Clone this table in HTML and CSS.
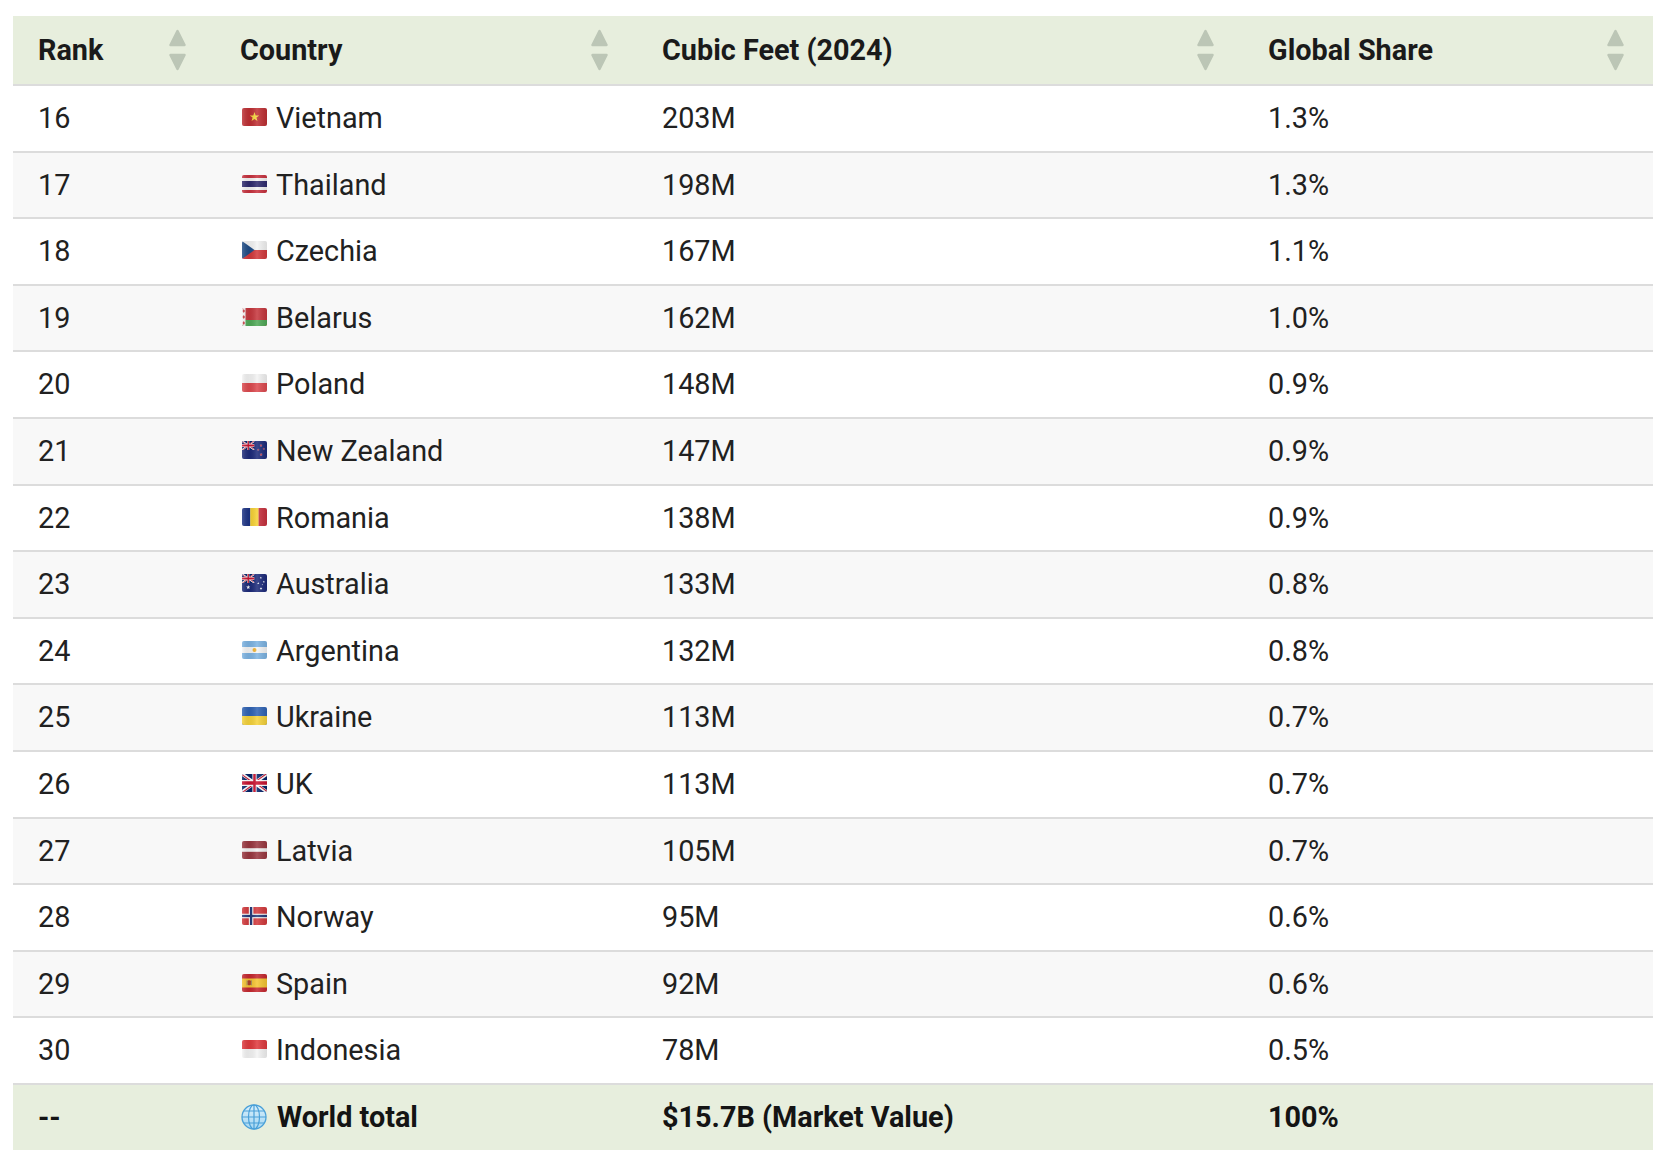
FILE: index.html
```html
<!DOCTYPE html>
<html lang="en">
<head>
<meta charset="utf-8">
<title>Top countries by cubic feet (2024)</title>
<link rel="stylesheet" href="styles.css">
</head>
<body>
<div class="sprite">
<svg width="0" height="0" xmlns="http://www.w3.org/2000/svg">
  <defs>
    <linearGradient id="wave" x1="0" y1="0" x2="1" y2="0">
      <stop offset="0" stop-color="#fff" stop-opacity="0.18"/>
      <stop offset="0.3" stop-color="#000" stop-opacity="0.06"/>
      <stop offset="0.6" stop-color="#fff" stop-opacity="0.14"/>
      <stop offset="1" stop-color="#000" stop-opacity="0.10"/>
    </linearGradient>
    <linearGradient id="globeFill" x1="0" y1="0" x2="0" y2="1">
      <stop offset="0" stop-color="#d7eefb"/>
      <stop offset="1" stop-color="#a6d7f2"/>
    </linearGradient>
    <clipPath id="fr"><rect width="25" height="18" rx="2"/></clipPath>
    <clipPath id="ujt"><path d="M30,15 h30 v15 z v15 h-30 z h-30 v-15 z v-15 h30 z"/></clipPath>
    <symbol id="uj" viewBox="0 0 60 30" preserveAspectRatio="none">
      <rect width="60" height="30" fill="#012169"/>
      <path d="M0,0 L60,30 M60,0 L0,30" stroke="#fff" stroke-width="6"/>
      <path d="M0,0 L60,30 M60,0 L0,30" clip-path="url(#ujt)" stroke="#C8102E" stroke-width="4"/>
      <path d="M30,0 v30 M0,15 h60" stroke="#fff" stroke-width="10"/>
      <path d="M30,0 v30 M0,15 h60" stroke="#C8102E" stroke-width="6"/>
    </symbol>
    <symbol id="star5" viewBox="0 0 10 10">
      <path d="M5 0 L6.18 3.38 L9.76 3.45 L6.9 5.62 L7.94 9.05 L5 7 L2.06 9.05 L3.1 5.62 L0.24 3.45 L3.82 3.38 Z"/>
    </symbol>
  </defs>
  <symbol id="f-vn" viewBox="0 0 25 18"><g clip-path="url(#fr)">
    <rect width="25" height="18" fill="#bf2f33"/>
    <path d="M12.5 4 L13.68 7.38 L17.26 7.45 L14.40 9.62 L15.44 13.05 L12.5 11 L9.56 13.05 L10.60 9.62 L7.74 7.45 L11.32 7.38 Z" fill="#f7d83e"/>
    <rect width="25" height="18" fill="url(#wave)"/></g></symbol>
  <symbol id="f-th" viewBox="0 0 25 18"><g clip-path="url(#fr)">
    <rect width="25" height="18" fill="#c8313e"/>
    <rect y="3" width="25" height="12" fill="#f4f4f4"/>
    <rect y="6" width="25" height="6" fill="#2e2a6e"/>
    <rect width="25" height="18" fill="url(#wave)"/></g></symbol>
  <symbol id="f-cz" viewBox="0 0 25 18"><g clip-path="url(#fr)">
    <rect width="25" height="18" fill="#f4f4f4"/>
    <rect y="9" width="25" height="9" fill="#d3393c"/>
    <path d="M0 0 L12.5 9 L0 18 Z" fill="#1f4c86"/>
    <rect width="25" height="18" fill="url(#wave)"/></g></symbol>
  <symbol id="f-by" viewBox="0 0 25 18"><g clip-path="url(#fr)">
    <rect width="25" height="18" fill="#c6363d"/>
    <rect y="12" width="25" height="6" fill="#4fa957"/>
    <rect width="3.5" height="18" fill="#f4f4f4"/>
    <path d="M1.75 1 L3 3 L1.75 5 L0.5 3 Z M1.75 7 L3 9 L1.75 11 L0.5 9 Z M1.75 13 L3 15 L1.75 17 L0.5 15 Z" fill="#c6363d"/>
    <rect width="25" height="18" fill="url(#wave)"/></g></symbol>
  <symbol id="f-pl" viewBox="0 0 25 18"><g clip-path="url(#fr)">
    <rect width="25" height="18" fill="#f4f4f4"/>
    <rect y="9" width="25" height="9" fill="#de4a4f"/>
    <rect width="25" height="18" fill="url(#wave)"/></g></symbol>
  <symbol id="f-nz" viewBox="0 0 25 18"><g clip-path="url(#fr)">
    <rect width="25" height="18" fill="#1c2a7a"/>
    <use href="#uj" x="0" y="0" width="12.5" height="9"/>
    <g fill="#d62d3a" stroke="#fff" stroke-width="0.5">
      <use href="#star5" x="17.5" y="3" width="3" height="3"/>
      <use href="#star5" x="20.5" y="6.5" width="2.6" height="2.6"/>
      <use href="#star5" x="15" y="7.5" width="2.6" height="2.6"/>
      <use href="#star5" x="17.5" y="12" width="3.2" height="3.2"/>
    </g>
    <rect width="25" height="18" fill="url(#wave)"/></g></symbol>
  <symbol id="f-ro" viewBox="0 0 25 18"><g clip-path="url(#fr)">
    <rect width="8.4" height="18" fill="#1c3385"/>
    <rect x="8.3" width="8.4" height="18" fill="#f6d133"/>
    <rect x="16.6" width="8.4" height="18" fill="#c8313e"/>
    <rect width="25" height="18" fill="url(#wave)"/></g></symbol>
  <symbol id="f-au" viewBox="0 0 25 18"><g clip-path="url(#fr)">
    <rect width="25" height="18" fill="#1c2a7a"/>
    <use href="#uj" x="0" y="0" width="12.5" height="9"/>
    <g fill="#fff">
      <use href="#star5" x="4" y="11" width="4.5" height="4.5"/>
      <use href="#star5" x="17.5" y="2.5" width="2.6" height="2.6"/>
      <use href="#star5" x="20.5" y="6.5" width="2.6" height="2.6"/>
      <use href="#star5" x="15" y="8" width="2.6" height="2.6"/>
      <use href="#star5" x="17.5" y="13" width="3" height="3"/>
      <use href="#star5" x="19.5" y="10" width="1.6" height="1.6"/>
    </g>
    <rect width="25" height="18" fill="url(#wave)"/></g></symbol>
  <symbol id="f-ar" viewBox="0 0 25 18"><g clip-path="url(#fr)">
    <rect width="25" height="18" fill="#7db4e3"/>
    <rect y="6" width="25" height="6" fill="#f6f6f6"/>
    <circle cx="12.5" cy="9" r="2" fill="#f2b331"/>
    <rect width="25" height="18" fill="url(#wave)"/></g></symbol>
  <symbol id="f-ua" viewBox="0 0 25 18"><g clip-path="url(#fr)">
    <rect width="25" height="18" fill="#2f63b5"/>
    <rect y="9" width="25" height="9" fill="#f6d33a"/>
    <rect width="25" height="18" fill="url(#wave)"/></g></symbol>
  <symbol id="f-gb" viewBox="0 0 25 18"><g clip-path="url(#fr)">
    <use href="#uj" x="0" y="0" width="25" height="18"/>
    <rect width="25" height="18" fill="url(#wave)"/></g></symbol>
  <symbol id="f-lv" viewBox="0 0 25 18"><g clip-path="url(#fr)">
    <rect width="25" height="18" fill="#9a3740"/>
    <rect y="7.2" width="25" height="3.6" fill="#f4f4f4"/>
    <rect width="25" height="18" fill="url(#wave)"/></g></symbol>
  <symbol id="f-no" viewBox="0 0 25 18"><g clip-path="url(#fr)">
    <rect width="25" height="18" fill="#d3393c"/>
    <rect x="6.8" width="4.6" height="18" fill="#f4f4f4"/>
    <rect y="6.7" width="25" height="4.6" fill="#f4f4f4"/>
    <rect x="8" width="2.2" height="18" fill="#22397a"/>
    <rect y="7.9" width="25" height="2.2" fill="#22397a"/>
    <rect width="25" height="18" fill="url(#wave)"/></g></symbol>
  <symbol id="f-es" viewBox="0 0 25 18"><g clip-path="url(#fr)">
    <rect width="25" height="18" fill="#c6282f"/>
    <rect y="4.5" width="25" height="9" fill="#f6c631"/>
    <rect x="5.5" y="6.3" width="3.4" height="5" rx="1" fill="#b0442c"/>
    <rect x="4.6" y="6.3" width="0.8" height="5" fill="#9a8a6a"/>
    <rect x="9" y="6.3" width="0.8" height="5" fill="#9a8a6a"/>
    <rect width="25" height="18" fill="url(#wave)"/></g></symbol>
  <symbol id="f-id" viewBox="0 0 25 18"><g clip-path="url(#fr)">
    <rect width="25" height="18" fill="#f4f4f4"/>
    <rect width="25" height="9" fill="#e03a3e"/>
    <rect width="25" height="18" fill="url(#wave)"/></g></symbol>
  <symbol id="globe" viewBox="0 0 26 26">
    <circle cx="13" cy="13" r="12" fill="url(#globeFill)" stroke="#4aa0d8" stroke-width="1.3"/>
    <g fill="none" stroke="#4aa0d8" stroke-width="1.2">
      <ellipse cx="13" cy="13" rx="5.5" ry="12"/>
      <path d="M13 1 V25 M1 13 H25 M3 7 H23 M3 19 H23"/>
    </g>
  </symbol>
</svg>
</div>

<div class="wrap">
<table class="data">
  <colgroup>
    <col class="c-rank"><col class="c-country"><col class="c-cubic"><col class="c-share">
  </colgroup>
  <thead>
    <tr>
      <th><div class="th-in"><span>Rank</span><svg class="sort" viewBox="0 0 17 42"><path d="M8.5 2 L15.5 16 H1.5 Z"/><path d="M1.5 26 H15.5 L8.5 40 Z"/></svg></div></th>
      <th><div class="th-in"><span>Country</span><svg class="sort" viewBox="0 0 17 42"><path d="M8.5 2 L15.5 16 H1.5 Z"/><path d="M1.5 26 H15.5 L8.5 40 Z"/></svg></div></th>
      <th><div class="th-in"><span>Cubic Feet (2024)</span><svg class="sort" viewBox="0 0 17 42"><path d="M8.5 2 L15.5 16 H1.5 Z"/><path d="M1.5 26 H15.5 L8.5 40 Z"/></svg></div></th>
      <th><div class="th-in"><span>Global Share</span><svg class="sort" viewBox="0 0 17 42"><path d="M8.5 2 L15.5 16 H1.5 Z"/><path d="M1.5 26 H15.5 L8.5 40 Z"/></svg></div></th>
    </tr>
  </thead>
  <tbody>
    <tr><td>16</td><td><svg class="flag"><use href="#f-vn"/></svg>Vietnam</td><td>203M</td><td>1.3%</td></tr>
    <tr><td>17</td><td><svg class="flag"><use href="#f-th"/></svg>Thailand</td><td>198M</td><td>1.3%</td></tr>
    <tr><td>18</td><td><svg class="flag"><use href="#f-cz"/></svg>Czechia</td><td>167M</td><td>1.1%</td></tr>
    <tr><td>19</td><td><svg class="flag"><use href="#f-by"/></svg>Belarus</td><td>162M</td><td>1.0%</td></tr>
    <tr><td>20</td><td><svg class="flag"><use href="#f-pl"/></svg>Poland</td><td>148M</td><td>0.9%</td></tr>
    <tr><td>21</td><td><svg class="flag"><use href="#f-nz"/></svg>New Zealand</td><td>147M</td><td>0.9%</td></tr>
    <tr><td>22</td><td><svg class="flag"><use href="#f-ro"/></svg>Romania</td><td>138M</td><td>0.9%</td></tr>
    <tr><td>23</td><td><svg class="flag"><use href="#f-au"/></svg>Australia</td><td>133M</td><td>0.8%</td></tr>
    <tr><td>24</td><td><svg class="flag"><use href="#f-ar"/></svg>Argentina</td><td>132M</td><td>0.8%</td></tr>
    <tr><td>25</td><td><svg class="flag"><use href="#f-ua"/></svg>Ukraine</td><td>113M</td><td>0.7%</td></tr>
    <tr><td>26</td><td><svg class="flag"><use href="#f-gb"/></svg>UK</td><td>113M</td><td>0.7%</td></tr>
    <tr><td>27</td><td><svg class="flag"><use href="#f-lv"/></svg>Latvia</td><td>105M</td><td>0.7%</td></tr>
    <tr><td>28</td><td><svg class="flag"><use href="#f-no"/></svg>Norway</td><td>95M</td><td>0.6%</td></tr>
    <tr><td>29</td><td><svg class="flag"><use href="#f-es"/></svg>Spain</td><td>92M</td><td>0.6%</td></tr>
    <tr><td>30</td><td><svg class="flag"><use href="#f-id"/></svg>Indonesia</td><td>78M</td><td>0.5%</td></tr>
  </tbody>
  <tfoot>
    <tr><td>--</td><td><svg class="globe"><use href="#globe"/></svg>World total</td><td>$15.7B (Market Value)</td><td>100%</td></tr>
  </tfoot>
</table>
</div>
</body>
</html>
```

FILE: styles.css
```css
body {
  margin: 0;
  background: #ffffff;
  color: #212121;
  font-family: Roboto, "Liberation Sans", Arial, sans-serif;
}

.sprite {
  height: 0;
  overflow: hidden;
}

.wrap {
  padding: 16px 13px;
}

.data {
  width: 1640px;
  border-collapse: collapse;
  table-layout: fixed;
  font-size: 28.8px;
  line-height: 32.6px;
}

.c-rank { width: 202px; }
.c-country { width: 422px; }
.c-cubic { width: 606px; }
.c-share { width: 410px; }

.data th,
.data td {
  text-align: left;
  white-space: nowrap;
}

.data thead th {
  background: #e7eedd;
  color: #1a1a1a;
  font-weight: 700;
  padding: 13px 29px 13px 25px;
  border-bottom: 2px solid #dcdcdc;
}

.th-in {
  display: flex;
  align-items: center;
  justify-content: space-between;
}

.sort {
  width: 17px;
  height: 42px;
  flex: none;
  fill: #bcc6b6;
  stroke: #bcc6b6;
  stroke-width: 2.5;
  stroke-linejoin: round;
}

.data tbody td {
  padding: 16px 25px;
  border-bottom: 2px solid #dcdcdc;
}

.data tbody tr:nth-child(even) td {
  background: #f8f8f8;
}

.data tfoot td {
  background: #e7eedd;
  color: #141414;
  font-weight: 700;
  padding: 16px 25px;
}

.flag {
  width: 25px;
  height: 18px;
  margin-left: 2px;
  margin-right: 9px;
  vertical-align: 2px;
}

.globe {
  width: 26px;
  height: 26px;
  margin-left: 1px;
  margin-right: 10px;
  vertical-align: -3px;
}
```
